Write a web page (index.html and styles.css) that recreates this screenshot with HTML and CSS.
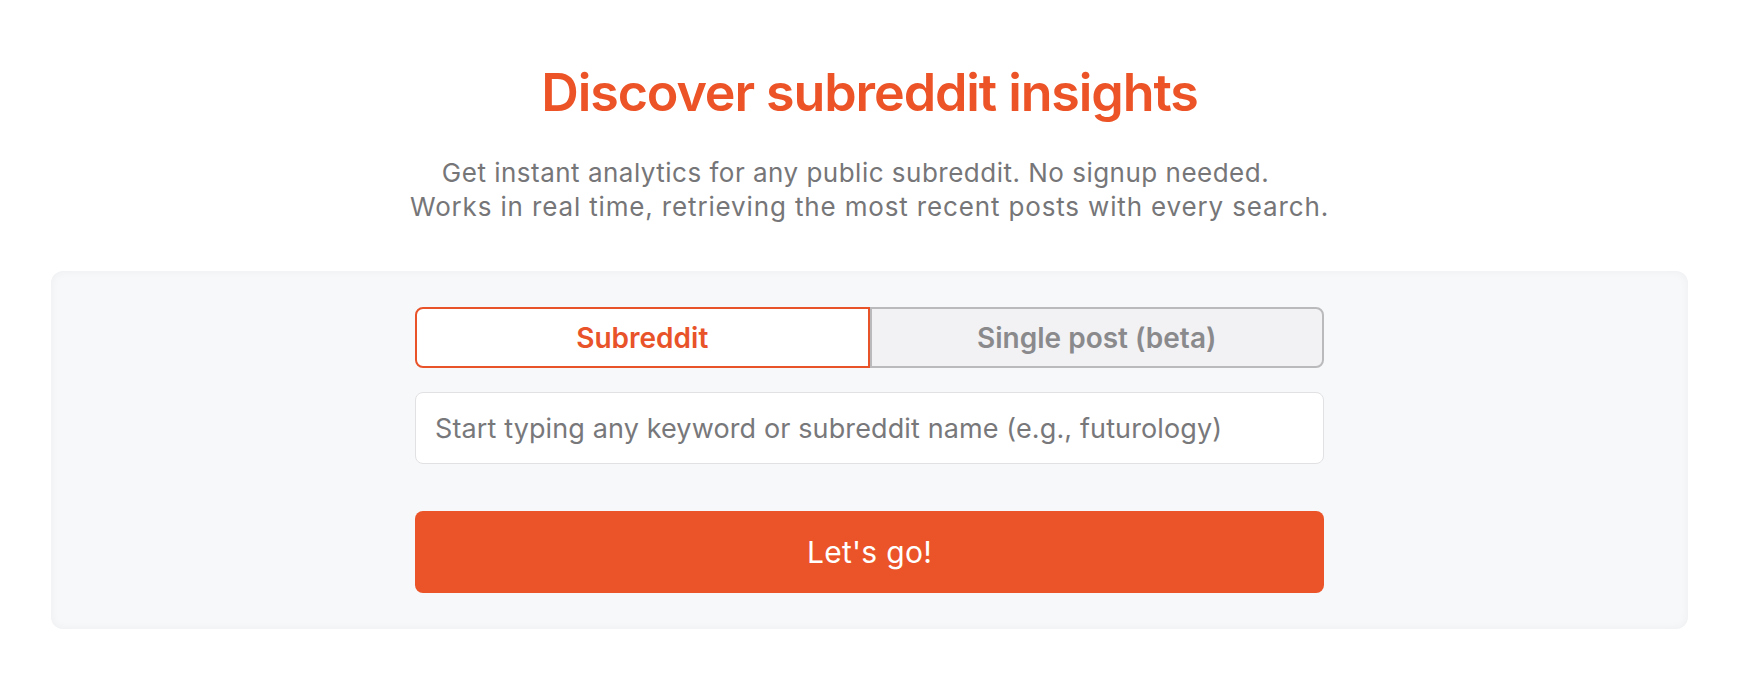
FILE: index.html
```html
<!DOCTYPE html>
<html lang="en">
<head>
<meta charset="utf-8">
<title>Discover subreddit insights</title>
<link rel="stylesheet" href="styles.css">
</head>
<body>
<main class="page">
  <header class="hero">
    <h1 class="hero-title">Discover subreddit insights</h1>
    <p class="hero-sub">
      <span class="sub-line sub-line-first">Get instant analytics for any public subreddit. No signup needed.</span>
      <span class="sub-line sub-line-second">Works in real time, retrieving the most recent posts with every search.</span>
    </p>
  </header>
  <section class="card">
    <div class="form">
      <div class="tabs">
        <button class="tab tab-active" type="button">Subreddit</button>
        <button class="tab tab-inactive" type="button">Single post (beta)</button>
      </div>
      <input class="search" type="text" placeholder="Start typing any keyword or subreddit name (e.g., futurology)">
      <button class="go" type="button">Let's go!</button>
    </div>
  </section>
</main>
</body>
</html>
```
FILE: styles.css
```css
* { box-sizing: border-box; }
html, body { margin: 0; padding: 0; background: #ffffff; }
body {
  font-family: Inter, "Noto Sans", "Liberation Sans", sans-serif;
  color: #333;
}
.page {
  padding: 61px 54px 0 51px;
}
.hero {
  text-align: center;
}
.hero-title {
  margin: 0;
  font-size: 52px;
  line-height: 64px;
  font-weight: 600;
  color: #ec5428;
  letter-spacing: -1.1px;
}
.hero-sub {
  margin: 31px 0 0;
  font-size: 26px;
  line-height: 34px;
  color: #767678;
  font-weight: 400;
}
.sub-line {
  display: block;
}
.sub-line-first {
  letter-spacing: 0.49px;
  padding-right: 28px;
}
.sub-line-second {
  letter-spacing: 0.85px;
}
.card {
  margin-top: 47px;
  background: #f7f8fa;
  border-radius: 12px;
  box-shadow: inset 0 0 10px rgba(0, 0, 0, 0.045);
  padding: 36px 0;
}
.form {
  width: 909px;
  margin: 0 auto;
  display: flex;
  flex-direction: column;
}
.tabs {
  display: grid;
  grid-template-columns: 1fr 1fr;
  height: 61px;
}
.tab {
  font-family: inherit;
  font-size: 28px;
  font-weight: 600;
  border-style: solid;
  border-width: 2px;
  margin: 0;
  padding: 0;
  cursor: pointer;
}
.tab-active {
  background: #ffffff;
  border-color: #e9532a;
  color: #e9532a;
  border-radius: 8px 0 0 8px;
}
.tab-inactive {
  background: #f2f2f4;
  border-color: #bababd;
  color: #8a8a8d;
  border-radius: 0 8px 8px 0;
}
.search {
  margin-top: 24px;
  height: 72px;
  background: #ffffff;
  border: 1px solid #e1e1e4;
  border-radius: 8px;
  padding: 0 19px;
  font-family: inherit;
  font-size: 27px;
  letter-spacing: 0.12px;
  color: #333;
  outline: none;
}
.search::placeholder {
  color: #78787b;
}
.go {
  margin-top: 47px;
  height: 82px;
  background: #eb5428;
  border: none;
  border-radius: 8px;
  color: #ffffff;
  font-family: inherit;
  font-size: 30px;
  font-weight: 400;
  letter-spacing: 0.3px;
  cursor: pointer;
}
```
